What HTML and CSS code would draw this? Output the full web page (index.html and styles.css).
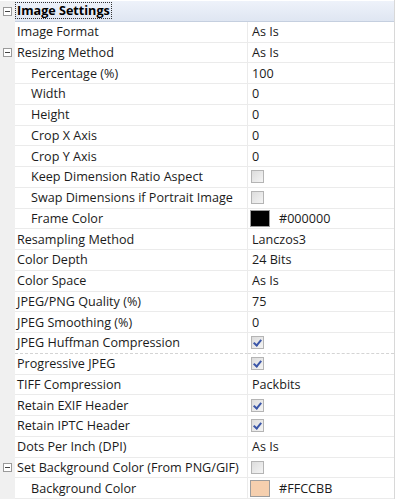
FILE: index.html
```html
<!DOCTYPE html>
<html lang="en">
  <head>
    <meta charset="UTF-8" />
    <title>Image Settings</title>
    <link rel="stylesheet" href="styles.css">
  </head>
  <body>
    <div class="grid">
      <div class="row head">
        <div class="gutter"><span class="toggle"></span></div>
        <div class="cat"><span class="focus">Image Settings</span></div>
      </div>
      <div class="row"><div class="gutter"></div><div class="name">Image Format</div><div class="value">As Is</div></div>
      <div class="row"><div class="gutter"><span class="toggle"></span></div><div class="name">Resizing Method</div><div class="value">As Is</div></div>
      <div class="row"><div class="gutter"></div><div class="name sub">Percentage (%)</div><div class="value">100</div></div>
      <div class="row"><div class="gutter"></div><div class="name sub">Width</div><div class="value">0</div></div>
      <div class="row"><div class="gutter"></div><div class="name sub">Height</div><div class="value">0</div></div>
      <div class="row"><div class="gutter"></div><div class="name sub">Crop X Axis</div><div class="value">0</div></div>
      <div class="row"><div class="gutter"></div><div class="name sub">Crop Y Axis</div><div class="value">0</div></div>
      <div class="row"><div class="gutter"></div><div class="name sub">Keep Dimension Ratio Aspect</div><div class="value"><span class="check"></span></div></div>
      <div class="row"><div class="gutter"></div><div class="name sub">Swap Dimensions if Portrait Image</div><div class="value"><span class="check"></span></div></div>
      <div class="row"><div class="gutter"></div><div class="name sub">Frame Color</div><div class="value"><span class="swatch black"></span><span class="hex">#000000</span></div></div>
      <div class="row"><div class="gutter"></div><div class="name">Resampling Method</div><div class="value">Lanczos3</div></div>
      <div class="row"><div class="gutter"></div><div class="name">Color Depth</div><div class="value">24 Bits</div></div>
      <div class="row"><div class="gutter"></div><div class="name">Color Space</div><div class="value">As Is</div></div>
      <div class="row"><div class="gutter"></div><div class="name">JPEG/PNG Quality (%)</div><div class="value">75</div></div>
      <div class="row"><div class="gutter"></div><div class="name">JPEG Smoothing (%)</div><div class="value">0</div></div>
      <div class="row dotted"><div class="gutter"></div><div class="name">JPEG Huffman Compression</div><div class="value"><span class="check on"></span></div></div>
      <div class="row"><div class="gutter"></div><div class="name">Progressive JPEG</div><div class="value"><span class="check on"></span></div></div>
      <div class="row"><div class="gutter"></div><div class="name">TIFF Compression</div><div class="value">Packbits</div></div>
      <div class="row"><div class="gutter"></div><div class="name">Retain EXIF Header</div><div class="value"><span class="check on"></span></div></div>
      <div class="row"><div class="gutter"></div><div class="name">Retain IPTC Header</div><div class="value"><span class="check on"></span></div></div>
      <div class="row"><div class="gutter"></div><div class="name">Dots Per Inch (DPI)</div><div class="value">As Is</div></div>
      <div class="row"><div class="gutter"><span class="toggle"></span></div><div class="name">Set Background Color (From PNG/GIF)</div><div class="value"><span class="check"></span></div></div>
      <div class="row"><div class="gutter"></div><div class="name sub">Background Color</div><div class="value"><span class="swatch peach"></span><span class="hex">#FFCCBB</span></div></div>
    </div>
  </body>
</html>
```

FILE: styles.css
```css
body {
  margin: 0;
  background: #fff;
  font: 12.6px 'Open Sans', 'Liberation Sans', Arial, sans-serif;
  color: #1b1b1b;
}
.grid {
  width: 394px;
  border-right: 1px solid #d8d8d8;
  padding-top: 1px;
}
.row {
  display: flex;
  height: 20.75px;
  align-items: stretch;
}
.gutter {
  width: 15px;
  flex: none;
  background: #f0f0f0;
  display: flex;
  align-items: center;
  justify-content: center;
}
.toggle {
  position: relative;
  width: 7px;
  height: 7px;
  border: 1px solid #9a9a9a;
  background: #fff;
}
.toggle:after {
  content: '';
  position: absolute;
  left: 1px;
  top: 3px;
  width: 5px;
  height: 1px;
  background: #444;
}
.name,
.value,
.cat {
  display: flex;
  align-items: center;
  border-bottom: 1px solid #ebebeb;
  white-space: nowrap;
  overflow: hidden;
}
.name {
  width: 230px;
  flex: none;
  padding-left: 2px;
  border-right: 1px solid #ebebeb;
}
.name.sub {
  padding-left: 16px;
  width: 216px;
}
.value {
  flex: 1;
  padding-left: 4px;
}
.head .cat {
  flex: 1;
  background: linear-gradient(#eef2fa, #dfe6f2);
  border-bottom: 1px solid #c5cfdf;
  font-weight: bold;
  color: #000;
}
.focus {
  border: 1px dotted #333;
  padding: 0 1px;
  line-height: 15px;
}
.dotted .name,
.dotted .value {
  border-bottom: 1px dashed #d4d4d4;
}
.check {
  position: relative;
  width: 11px;
  height: 11px;
  border: 1px solid #b4b4b4;
  background: linear-gradient(135deg, #dcdcdc, #f4f4f4);
  margin-left: -1px;
}
.check.on:after {
  content: '';
  position: absolute;
  left: 3px;
  top: 1px;
  width: 3px;
  height: 6px;
  border: solid #3b56a8;
  border-width: 0 2px 2px 0;
  transform: rotate(40deg);
}
.swatch {
  width: 18px;
  height: 15px;
  border: 1px solid #9c9c9c;
  margin-left: -2px;
}
.swatch.black {
  background: #000;
}
.swatch.peach {
  background: #f5cfae;
}
.hex {
  margin-left: 9px;
}
```
